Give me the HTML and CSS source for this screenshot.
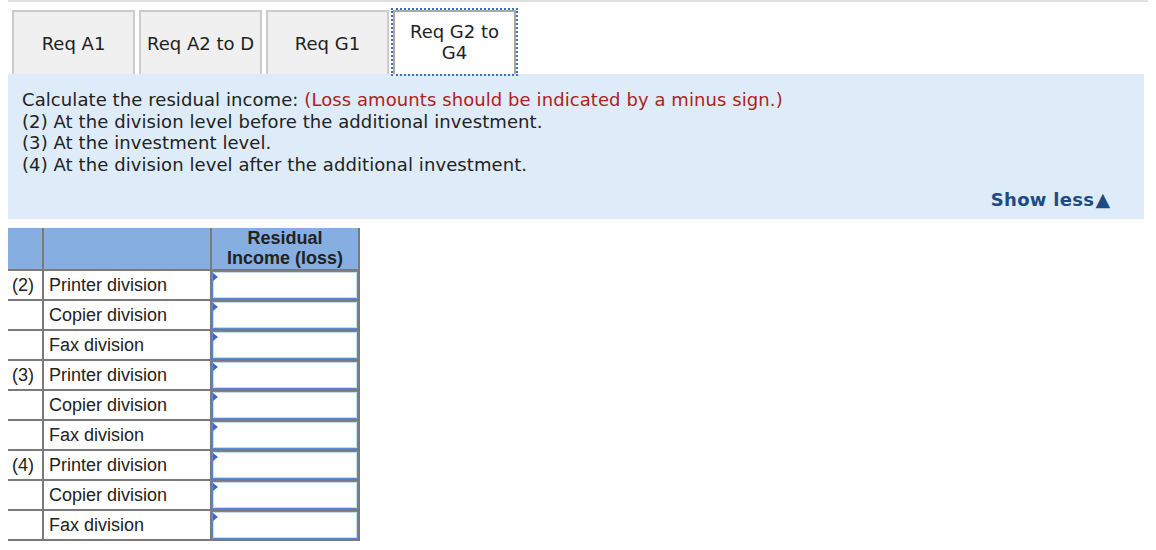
FILE: index.html
```html
<!DOCTYPE html>
<html>
<head>
<meta charset="utf-8">
<link rel="stylesheet" href="styles.css">
</head>
<body>
<div class="topline"></div>
<div class="tabs">
  <div class="tab">Req A1</div>
  <div class="tab">Req A2 to D</div>
  <div class="tab">Req G1</div>
  <div class="tab active">Req G2 to<br>G4</div>
</div>
<div class="panel">
  <div class="line">Calculate the residual income: <span class="red">(Loss amounts should be indicated by a minus sign.)</span></div>
  <div class="line">(2) At the division level before the additional investment.</div>
  <div class="line">(3) At the investment level.</div>
  <div class="line">(4) At the division level after the additional investment.</div>
  <div class="showless">Show less<span class="tri">▲</span></div>
</div>
<table class="grid">
  <tr class="head"><th class="c1"></th><th class="c2"></th><th class="c3">Residual<br>Income (loss)</th></tr>
  <tr><td class="c1">(2)</td><td class="c2">Printer division</td><td class="c3"><div class="inp"><span class="mark"></span></div></td></tr>
  <tr><td class="c1"></td><td class="c2">Copier division</td><td class="c3"><div class="inp"><span class="mark"></span></div></td></tr>
  <tr><td class="c1"></td><td class="c2">Fax division</td><td class="c3"><div class="inp"><span class="mark"></span></div></td></tr>
  <tr><td class="c1">(3)</td><td class="c2">Printer division</td><td class="c3"><div class="inp"><span class="mark"></span></div></td></tr>
  <tr><td class="c1"></td><td class="c2">Copier division</td><td class="c3"><div class="inp"><span class="mark"></span></div></td></tr>
  <tr><td class="c1"></td><td class="c2">Fax division</td><td class="c3"><div class="inp"><span class="mark"></span></div></td></tr>
  <tr><td class="c1">(4)</td><td class="c2">Printer division</td><td class="c3"><div class="inp"><span class="mark"></span></div></td></tr>
  <tr><td class="c1"></td><td class="c2">Copier division</td><td class="c3"><div class="inp"><span class="mark"></span></div></td></tr>
  <tr><td class="c1"></td><td class="c2">Fax division</td><td class="c3"><div class="inp"><span class="mark"></span></div></td></tr>
</table>
</body>
</html>
```
FILE: styles.css
```css
html, body {
  margin: 0;
  padding: 0;
  background: #ffffff;
}
body {
  font-family: "DejaVu Sans", Verdana, sans-serif;
  color: #222222;
}
.topline {
  margin: 0 8px;
  height: 2px;
  background: #e0e0e0;
}
.tabs {
  display: flex;
  gap: 4px;
  margin: 8px 0 0 12px;
  height: 64px;
}
.tab {
  box-sizing: border-box;
  width: 123px;
  height: 64px;
  border: 2px solid #cccccc;
  border-bottom: none;
  background: #f0f0f0;
  display: flex;
  align-items: center;
  justify-content: center;
  text-align: center;
  font-size: 18px;
  line-height: 21px;
  color: #222222;
}
.tab.active {
  background: #ffffff;
  border-color: #a8a8a8;
  outline: 2px dotted #3f72bb;
  outline-offset: 0px;
  padding-bottom: 2px;
}
.panel {
  margin: 0 12px 0 8px;
  background: #deebf8;
  padding: 15px 34px 8px 14px;
  font-size: 18px;
  line-height: 21.7px;
  letter-spacing: 0.08px;
}
.red {
  color: #ad2222;
}
.showless {
  margin-top: 13px;
  text-align: right;
  font-weight: bold;
  color: #1f4a84;
  font-size: 18px;
  line-height: 21.7px;
  letter-spacing: 0.3px;
}
.tri {
  font-size: 19px;
  margin-left: 1px;
  letter-spacing: 0;
}
.grid {
  margin: 9px 0 0 8px;
  border-collapse: separate;
  border-spacing: 0;
  font-family: "Liberation Sans", Arial, sans-serif;
  font-size: 18px;
  color: #222222;
}
.grid th, .grid td {
  padding: 0;
  border-right: 2px solid #7a7a7a;
  border-bottom: 2px solid #7a7a7a;
  box-sizing: border-box;
}
.head th {
  background: #86aee0;
  height: 43px;
  font-weight: bold;
  line-height: 20px;
  text-align: center;
  vertical-align: middle;
  padding-bottom: 1px;
}
.grid td {
  height: 30px;
  line-height: 28px;
}
.c1 {
  width: 36px;
}
.c2 {
  width: 168px;
  padding-left: 5px !important;
}
.c3 {
  width: 148px;
}
.grid td.c1 {
  padding-left: 4px !important;
}
.inp {
  position: relative;
  box-sizing: border-box;
  height: 28px;
  margin: 0;
  border: 1px solid #5a88d2;
  box-shadow: inset 0 0 0 1px #c9dbf3;
  background: #ffffff;
}
.mark {
  position: absolute;
  left: 0;
  top: 1px;
  width: 0;
  height: 0;
  border-left: 5px solid #3b6dbd;
  border-top: 4px solid transparent;
  border-bottom: 4px solid transparent;
}
```
